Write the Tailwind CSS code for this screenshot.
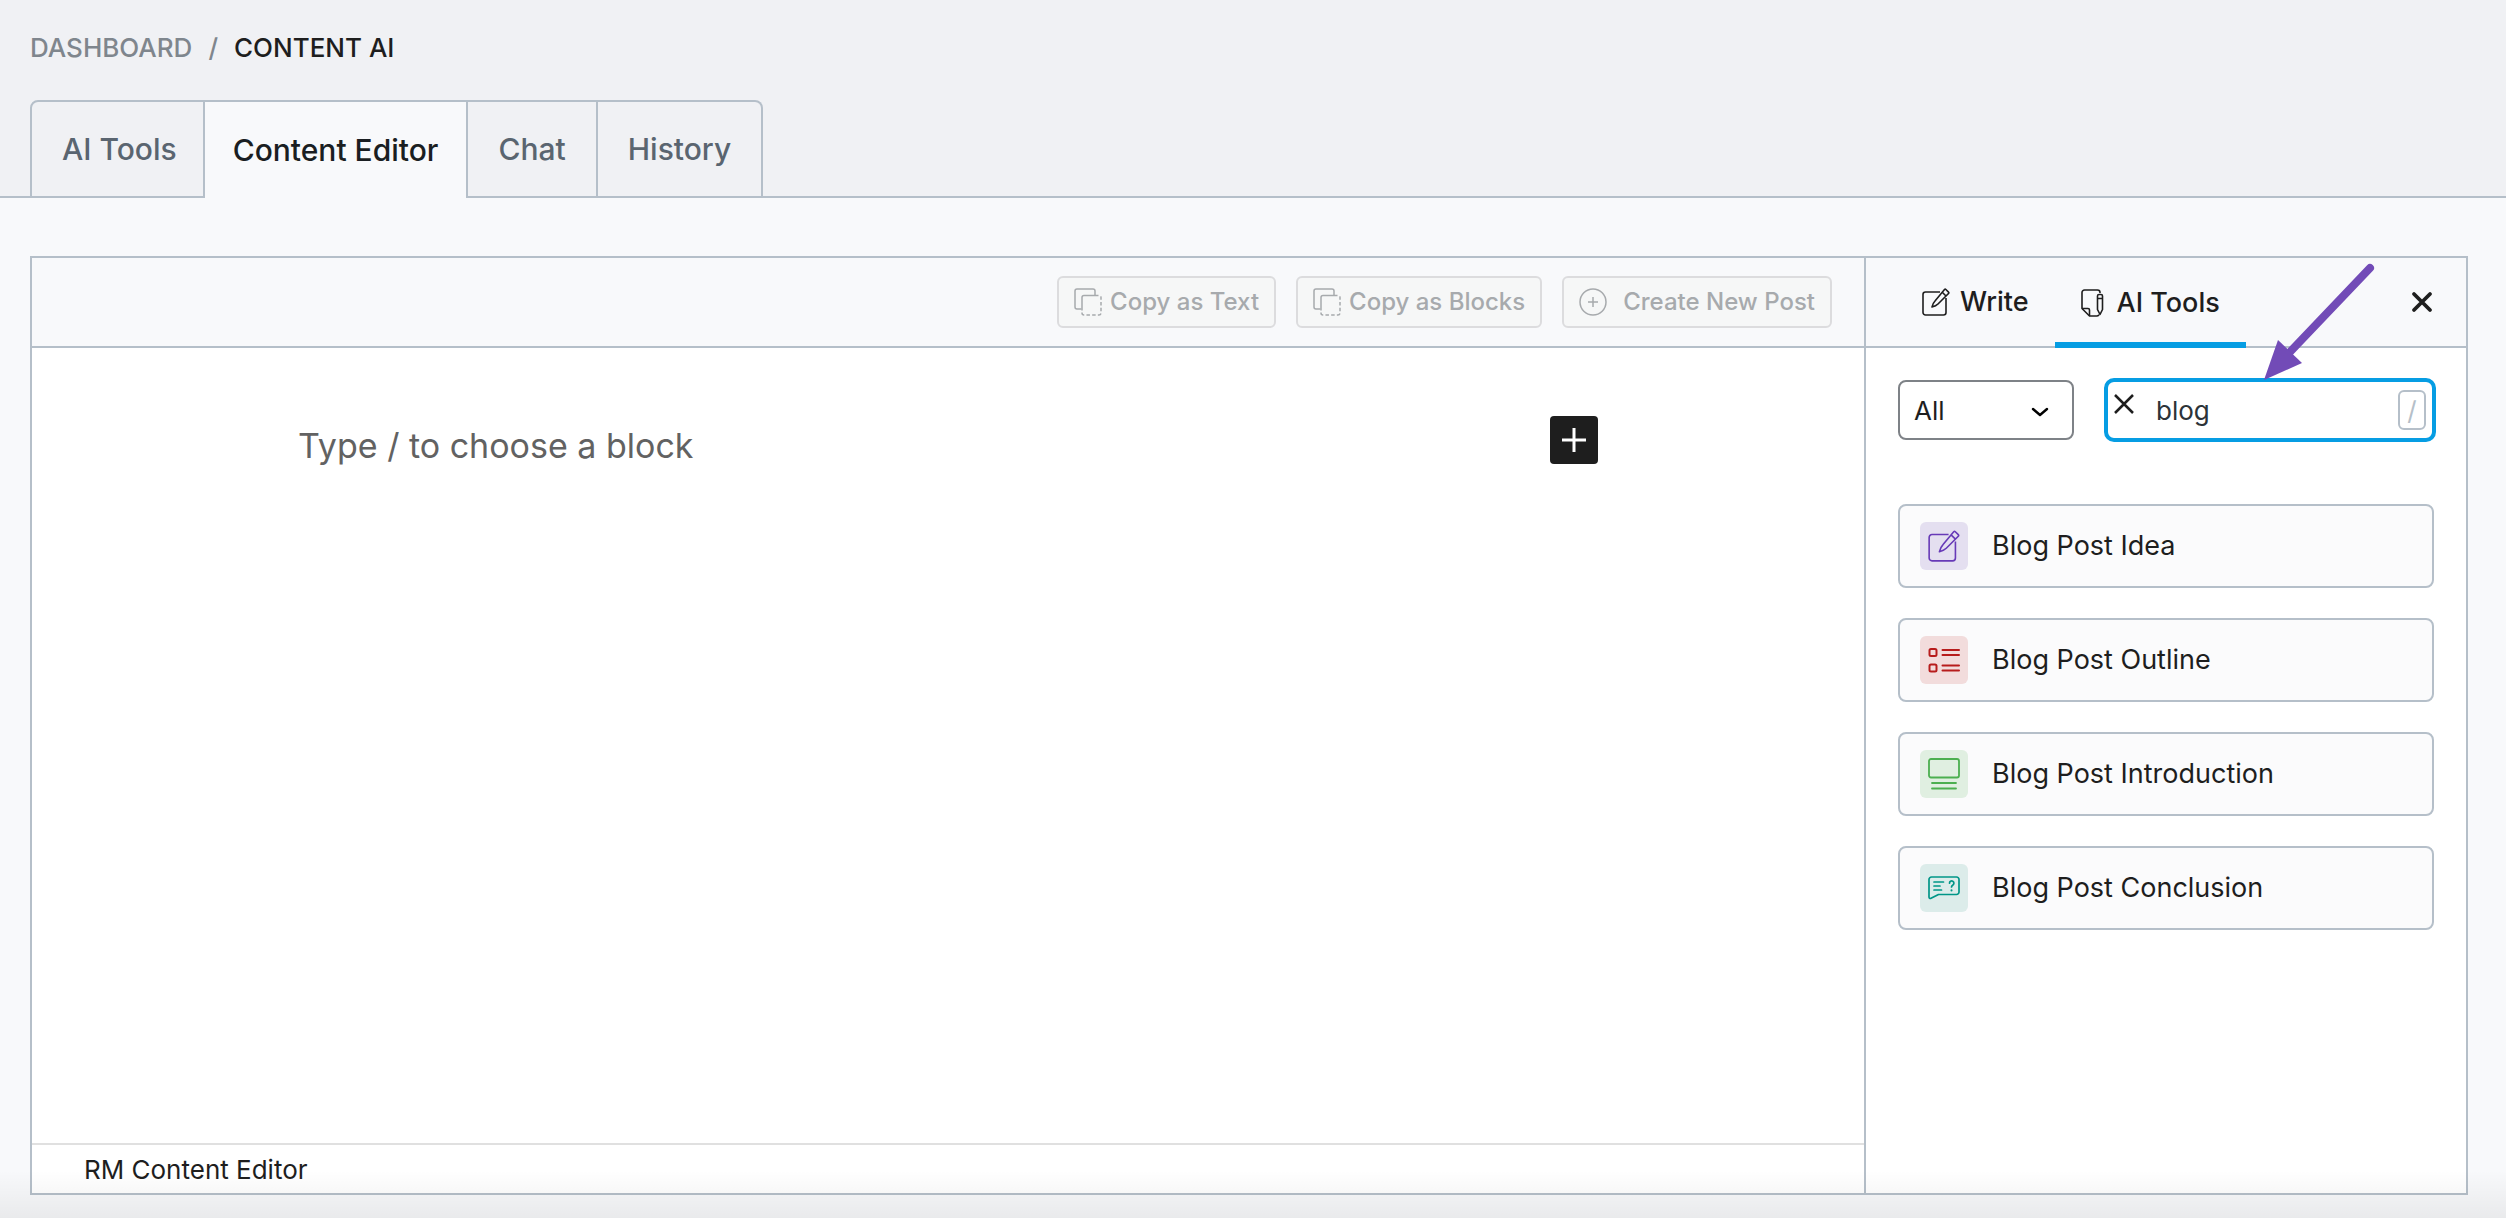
<!DOCTYPE html>
<html lang="en">
<head>
    <meta charset="UTF-8">
    <meta name="viewport" content="width=device-width, initial-scale=1.0">
    <title>Content AI</title>
    <script src="https://cdn.jsdelivr.net/npm/@tailwindcss/browser@4"></script>
</head>
<body class="relative flex min-h-screen flex-col bg-[#f8f9fb] font-['Inter',sans-serif] text-[#1e1e1e]">

    <header class="border-b-2 border-[#b5bfc9] bg-[#f0f1f4] px-[30px] pt-8">
        <nav aria-label="Breadcrumb" class="flex gap-4 text-[26px] leading-8 font-medium uppercase">
            <a href="#" class="text-[#7f868d]">Dashboard</a>
            <span class="text-[#7f868d]">/</span>
            <span>Content AI</span>
        </nav>
        <nav class="-mb-0.5 mt-9 flex h-[98px] text-[30px] font-medium text-[#5a6570]">
            <a href="#" class="flex items-center rounded-tl-lg border-2 border-[#b5bfc9] pr-[26px] pl-[30px]">AI Tools</a>
            <a href="#" class="flex items-center border-t-2 border-[#b5bfc9] bg-[#f8f9fb] px-7 text-[#1a1e22]">Content Editor</a>
            <a href="#" class="flex items-center border-2 border-[#b5bfc9] px-[30px]">Chat</a>
            <a href="#" class="flex items-center rounded-tr-lg border-2 border-l-0 border-[#b5bfc9] px-[30px]">History</a>
        </nav>
    </header>

    <main class="flex grow flex-col pt-[58px] pr-[38px] pb-[23px] pl-[30px]">
        <div class="flex grow border-2 border-[#b5bfc9] bg-white">

            <!-- Editor -->
            <section class="flex grow flex-col">
                <div class="flex h-[90px] items-center justify-end gap-5 border-b-2 border-[#b5bfc9] bg-[#f8f9fb] pr-8 text-[24px] font-medium text-[#a7aaad]">
                    <button disabled class="flex h-[52px] items-center gap-2 rounded-md border-2 border-[#dcdcde] bg-[#f6f7f7] px-[15px]">
                        <svg class="size-7" viewBox="0 0 28 28" fill="none" stroke="currentColor" stroke-width="1.5"><path d="M7.5 21H3a2 2 0 0 1-2-2V3a2 2 0 0 1 2-2h16a2 2 0 0 1 2 2v4.5"/><path d="M21 7.5H10a2 2 0 0 0-2 2V21"/><path d="M21 7.5h4a2 2 0 0 1 2 2V25a2 2 0 0 1-2 2H10a2 2 0 0 1-2-2v-4" stroke-dasharray="3.5 2.2"/></svg>
                        Copy as Text
                    </button>
                    <button disabled class="flex h-[52px] items-center gap-2 rounded-md border-2 border-[#dcdcde] bg-[#f6f7f7] px-[15px]">
                        <svg class="size-7" viewBox="0 0 28 28" fill="none" stroke="currentColor" stroke-width="1.5"><path d="M7.5 21H3a2 2 0 0 1-2-2V3a2 2 0 0 1 2-2h16a2 2 0 0 1 2 2v4.5"/><path d="M21 7.5H10a2 2 0 0 0-2 2V21"/><path d="M21 7.5h4a2 2 0 0 1 2 2V25a2 2 0 0 1-2 2H10a2 2 0 0 1-2-2v-4" stroke-dasharray="3.5 2.2"/></svg>
                        Copy as Blocks
                    </button>
                    <button disabled class="flex h-[52px] items-center gap-4 rounded-md border-2 border-[#dcdcde] bg-[#f6f7f7] px-[15px]">
                        <svg class="size-7" viewBox="0 0 28 28" fill="none" stroke="currentColor" stroke-width="1.5"><circle cx="14" cy="14" r="13"/><path d="M14 9v10M9 14h10"/></svg>
                        Create New Post
                    </button>
                </div>
                <div class="grow px-8 pt-[68px]">
                    <div class="mx-auto flex max-w-[1300px] items-start">
                        <input type="text" aria-label="Block content" placeholder="Type / to choose a block" class="h-[58px] min-w-0 grow text-[34px] outline-none placeholder:text-[#626262]">
                        <button aria-label="Add block" class="flex size-12 items-center justify-center rounded bg-[#1e1e1e] text-white">
                            <svg class="size-6" viewBox="0 0 24 24" fill="none" stroke="currentColor" stroke-width="3"><path d="M12 0v24M0 12h24"/></svg>
                        </button>
                    </div>
                </div>
                <footer class="flex h-[50px] items-center border-t-2 border-[#e0e0e0] pl-[52px] text-[26px]">RM Content Editor</footer>
            </section>

            <!-- Sidebar -->
            <aside class="w-[602px] shrink-0 border-l-2 border-[#b5bfc9]">
                <div class="flex h-[90px] border-b-2 border-[#b5bfc9] bg-[#f8f9fb] pr-8 pl-[30px] text-[27px] font-medium">
                    <button class="flex items-center gap-2.5 px-[26px]">
                        <svg class="size-7" viewBox="0 0 28 28" fill="none" stroke="currentColor" stroke-width="1.6" stroke-linejoin="round"><path d="M18 4H3.500a2.500 2.500 0 0 0-2.500 2.500v18A2.500 2.500 0 0 0 3.500 27h18a2.500 2.500 0 0 0 2.500-2.500V10"/><path d="M22.500 1.500a1 1 0 0 1 1.400 0l2.600 2.600a1 1 0 0 1 0 1.400L16 16c-1.500 1.500-4 2.500-6 3 .5-2 1.500-4.500 3-6zM20 4l4 4"/></svg>
                        Write
                    </button>
                    <button class="-mb-0.5 flex items-center gap-3 border-b-6 border-[#069de3] px-[26px] pt-1.5">
                        <svg class="h-7 w-6" viewBox="0 0 24 28" fill="none" stroke="currentColor" stroke-width="1.6" stroke-linejoin="round"><path d="M19 4V3.500A2.500 2.500 0 0 0 16.500 1h-13A2.500 2.500 0 0 0 1 3.500V19.500l7.500 7.500H15.500a3 3 0 0 0 2.500-1.200"/><path d="M1 19.500H7a1.500 1.500 0 0 1 1.500 1.500V27"/><path d="M16.500 7a1.500 1.500 0 0 1 1.500-1.500h2a1.500 1.500 0 0 1 1.500 1.500v13.500L19 25.500l-2.500-5zM16.500 9.500h5"/></svg>
                        AI Tools
                    </button>
                    <button aria-label="Close" class="ml-auto">
                        <svg class="size-6" viewBox="0 0 24 24" fill="none" stroke="currentColor" stroke-width="3.8" stroke-linecap="round"><path d="M4 4l16 16M20 4L4 20"/></svg>
                    </button>
                </div>
                <div class="px-8 pt-[30px]">
                    <div class="flex items-center gap-[30px]">
                        <div class="relative w-44 shrink-0">
                            <select aria-label="Category" class="h-[60px] w-full appearance-none rounded-lg border-2 border-[#7e8287] bg-white px-3.5 text-[26px]">
                                <option>All</option>
                            </select>
                            <svg class="pointer-events-none absolute top-[26px] right-6 h-3 w-5" viewBox="0 0 20 12" fill="none" stroke="#000" stroke-width="2.4" stroke-linecap="round" stroke-linejoin="round"><path d="M3 3l7 6 7-6"/></svg>
                        </div>
                        <div class="relative -mr-0.5 grow">
                            <input type="text" aria-label="Search tools" value="blog" class="h-16 w-full rounded-[10px] border-4 border-[#069de3] bg-white pr-12 pl-12 text-[26px] text-[#2c3338] outline-none">
                            <button aria-label="Clear search" class="absolute top-4 left-2.5">
                                <svg class="size-5" viewBox="0 0 20 20" fill="none" stroke="currentColor" stroke-width="2.5"><path d="M1 1l18 18M19 1L1 19"/></svg>
                            </button>
                            <kbd class="absolute top-3 right-2.5 flex h-10 w-7 items-center justify-center rounded-md border-2 border-[#b5bfc9] font-['Inter',sans-serif] text-[26px] text-[#b5bfc9]">/</kbd>
                        </div>
                    </div>
                    <div class="mt-[62px] flex flex-col gap-[30px] text-[27px]">
                        <button class="flex h-[84px] items-center gap-6 rounded-lg border-2 border-[#b5bfc9] bg-[#fbfbfc] px-5">
                            <span class="flex size-12 items-center justify-center rounded-md bg-[#e4dff0] text-[#673ab7]">
                                <svg class="size-8" viewBox="0 0 28 28" fill="none" stroke="currentColor" stroke-width="1.4" stroke-linejoin="round"><path d="M18 4H3.500a2.500 2.500 0 0 0-2.500 2.500v18A2.500 2.500 0 0 0 3.500 27h18a2.500 2.500 0 0 0 2.500-2.500V10"/><path d="M22.500 1.500a1 1 0 0 1 1.400 0l2.600 2.600a1 1 0 0 1 0 1.400L16 16c-1.500 1.500-4 2.500-6 3 .5-2 1.500-4.500 3-6zM20 4l4 4"/></svg>
                            </span>
                            Blog Post Idea
                        </button>
                        <button class="flex h-[84px] items-center gap-6 rounded-lg border-2 border-[#b5bfc9] bg-[#fbfbfc] px-5">
                            <span class="flex size-12 items-center justify-center rounded-md bg-[#f2dcdc] text-[#b71c1c]">
                                <svg class="size-8" viewBox="0 0 32 32" fill="none" stroke="currentColor" stroke-width="2" stroke-linecap="round"><rect x="1.500" y="5" width="7" height="7" rx="1.500"/><rect x="1.500" y="20.500" width="7" height="7" rx="1.500"/><path d="M14.500 6H31M14.500 11H31M14.500 21.500H31M14.500 26.500H31"/></svg>
                            </span>
                            Blog Post Outline
                        </button>
                        <button class="flex h-[84px] items-center gap-6 rounded-lg border-2 border-[#b5bfc9] bg-[#fbfbfc] px-5">
                            <span class="flex size-12 items-center justify-center rounded-md bg-[#e0efe1] text-[#4caf50]">
                                <svg class="size-8" viewBox="0 0 32 32" fill="none" stroke="currentColor" stroke-width="1.8" stroke-linecap="round"><rect x="1" y="1" width="30" height="18.500" rx="2"/><path d="M4 25h24M4 30.500h24"/></svg>
                            </span>
                            Blog Post Introduction
                        </button>
                        <button class="flex h-[84px] items-center gap-6 rounded-lg border-2 border-[#b5bfc9] bg-[#fbfbfc] px-5">
                            <span class="flex size-12 items-center justify-center rounded-md bg-[#dcecea] text-[#009688]">
                                <svg class="size-8" viewBox="0 0 32 32" fill="none" stroke="currentColor" stroke-width="1.7" stroke-linecap="round" stroke-linejoin="round"><path d="M3.500 5h25A2.500 2.500 0 0 1 31 7.500V20a2.500 2.500 0 0 1-2.500 2.500H10.500L3 26.300c-1 .5-2 0-2-1.300V7.500A2.500 2.500 0 0 1 3.500 5z"/><path d="M6 10h9.500M6 14h6M6 18h7.500"/><path d="M21.500 11.200a2.200 2.200 0 1 1 3.400 1.800c-.9.600-1.400 1-1.400 2"/><path d="M23.500 18.200v.3" stroke-width="2"/></svg>
                            </span>
                            Blog Post Conclusion
                        </button>
                    </div>
                </div>
            </aside>
        </div>
    </main>

    <!-- Fade along the bottom edge -->
    <div class="pointer-events-none absolute inset-x-0 bottom-0 h-12 bg-linear-to-t from-black/6 to-transparent"></div>

    <!-- Pointer to the search box -->
    <svg class="pointer-events-none absolute top-[258px] right-[124px] h-[124px] w-[120px]" viewBox="0 0 120 124" fill="#724bb7"><path d="M108 10L27 95" stroke="#724bb7" stroke-width="8" stroke-linecap="round"/><path d="M2 122L16 82L40 105z"/></svg>
</body>
</html>
